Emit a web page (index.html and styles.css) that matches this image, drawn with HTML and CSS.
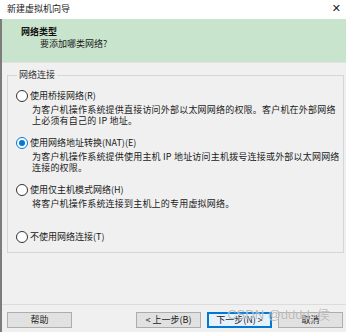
FILE: index.html
```html
<!DOCTYPE html>
<html lang="zh-CN">
<head>
    <meta charset="UTF-8">
    <meta name="viewport" content="width=device-width, initial-scale=1.0">
    <title>新建虚拟机向导</title>
    <link rel="stylesheet" href="styles.css">
</head>
<body>
    <div class="window">
        <div class="titlebar">
            <span class="title">新建虚拟机向导</span>
            <span class="close">✕</span>
        </div>

        <div class="main">
            <div class="header">
                <div class="header-title">网络类型</div>
                <div class="header-sub">要添加哪类网络?</div>
            </div>

            <fieldset class="group">
                <legend>网络连接</legend>

                <div class="option">
                    <span class="radio"></span>
                    <span class="option-label">使用桥接网络(R)</span>
                    <span class="option-desc">为客户机操作系统提供直接访问外部以太网网络的权限。客户机在外部网络<br>上必须有自己的 IP 地址。</span>
                </div>

                <div class="option">
                    <span class="radio checked"></span>
                    <span class="option-label">使用网络地址转换(NAT)(E)</span>
                    <span class="option-desc">为客户机操作系统提供使用主机 IP 地址访问主机拨号连接或外部以太网网络<br>连接的权限。</span>
                </div>

                <div class="option">
                    <span class="radio"></span>
                    <span class="option-label">使用仅主机模式网络(H)</span>
                    <span class="option-desc">将客户机操作系统连接到主机上的专用虚拟网络。</span>
                </div>

                <div class="option last">
                    <span class="radio"></span>
                    <span class="option-label">不使用网络连接(T)</span>
                </div>
            </fieldset>

            <div class="spacer"></div>

            <div class="footer">
                <button class="btn">帮助</button>
                <div class="nav-buttons">
                    <button class="btn">&lt; 上一步(B)</button>
                    <button class="btn focused">下一步(N) &gt;</button>
                    <button class="btn">取消</button>
                </div>
            </div>
        </div>

        <div class="watermark">CSDN @dddd_侯</div>
    </div>
</body>
</html>
```

FILE: styles.css
```css
body {
    margin: 0;
    padding: 0;
    font-family: "Noto Sans CJK SC", "Liberation Sans", sans-serif;
    font-size: 9px;
    color: #1a1a1a;
    background-color: #f0f0f0;
}

.window {
    position: relative;
    width: 346px;
    height: 332px;
    display: flex;
    flex-direction: column;
    overflow: hidden;
}

.titlebar {
    height: 19px;
    flex-shrink: 0;
    background-color: #ffffff;
    display: flex;
    align-items: center;
    justify-content: space-between;
    padding: 0 5px 2px 7px;
    box-sizing: border-box;
    color: #222;
}

.close {
    font-family: "DejaVu Sans", sans-serif;
    font-size: 11px;
    line-height: 11px;
    color: #222;
}

.main {
    flex: 1;
    display: flex;
    flex-direction: column;
    border-left: 2px solid #7c7c7c;
    background-color: #f0f0f0;
}

.header {
    height: 44px;
    box-sizing: border-box;
    background-color: #c8e4cc;
    border-bottom: 1px solid #e2e2e2;
    padding-top: 7px;
    line-height: 12px;
}

.header-title {
    font-weight: bold;
    padding-left: 19px;
    color: #111;
}

.header-sub {
    padding-left: 38px;
}

.group {
    margin: 6px 2px 0 5px;
    padding: 9px 8px 9px 8px;
    border: 1px solid #d6d6d6;
    min-width: 0;
}

.group legend {
    padding: 0 2px;
    margin-left: 1px;
    line-height: 12px;
    color: #333;
}

.option {
    display: grid;
    grid-template-columns: 12px 1fr;
    column-gap: 2px;
    align-content: start;
    height: 47px;
}

.option.last {
    height: auto;
}

.radio {
    width: 12px;
    height: 12px;
    box-sizing: border-box;
    border: 1px solid #333;
    border-radius: 50%;
    background-color: #fff;
    display: flex;
    align-items: center;
    justify-content: center;
}

.radio.checked {
    border-color: #0078d7;
}

.radio.checked::after {
    content: "";
    width: 6px;
    height: 6px;
    border-radius: 50%;
    background-color: #0078d7;
}

.option-label {
    line-height: 12px;
}

.option-desc {
    grid-column: 2;
    margin-top: 2px;
    padding-left: 2px;
    line-height: 11px;
    letter-spacing: 0.2px;
    white-space: nowrap;
}

.spacer {
    flex: 1;
}

.footer {
    border-top: 1px solid #dcdcdc;
    display: flex;
    align-items: center;
    padding: 7px 3px 4px 5px;
}

.nav-buttons {
    margin-left: auto;
    display: flex;
    gap: 6px;
}

.btn {
    width: 65px;
    height: 16px;
    padding: 0;
    font-family: inherit;
    font-size: 9px;
    color: #1a1a1a;
    background-color: #e1e1e1;
    border: 1px solid #adadad;
    line-height: 14px;
}

.btn.focused {
    border-color: #0078d7;
    background-color: #e5f1fb;
    box-shadow: inset 0 0 0 1px #0078d7;
}

.watermark {
    position: absolute;
    right: 16px;
    bottom: 9px;
    font-family: "Liberation Sans", "Noto Sans CJK SC", sans-serif;
    font-size: 13px;
    color: rgba(120, 120, 120, 0.5);
    text-shadow: 0 0 1px #fff;
}
```
